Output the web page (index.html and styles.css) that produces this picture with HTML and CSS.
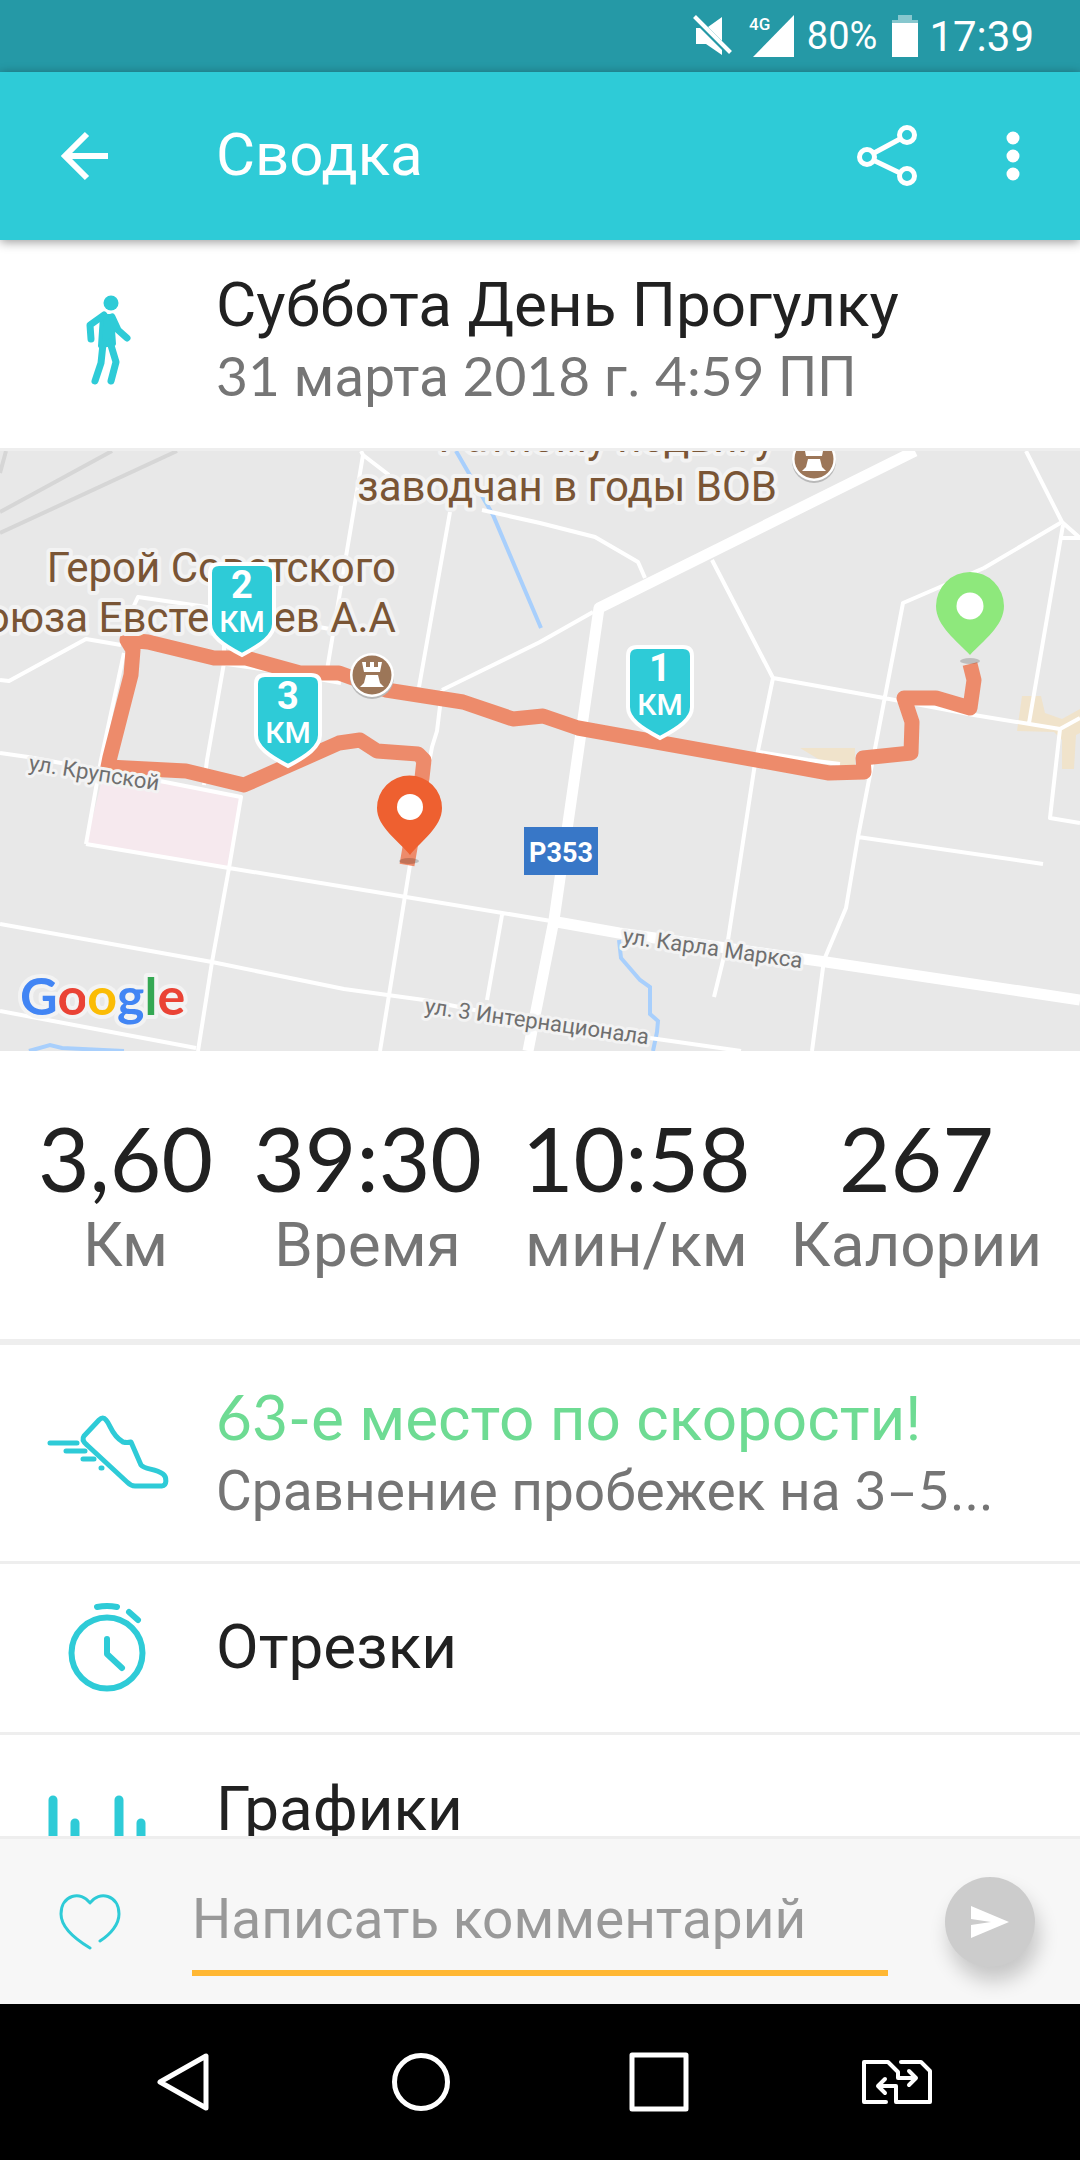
FILE: index.html
```html
<!DOCTYPE html>
<html lang="ru">
<head>
<meta charset="utf-8">
<meta name="viewport" content="width=device-width, initial-scale=1">
<title>Сводка</title>
<link rel="stylesheet" href="styles.css">
</head>
<body>
<div class="status-bar">
  <svg class="status-mute" width="40" height="42" viewBox="0 0 40 42" aria-hidden="true">
    <path d="M15 12 29 2V26ZM3 13H7L29 35V40L13 29H3Z" fill="#fff"/>
    <path d="M1.500 1.500 37.500 37.500" stroke="#fff" stroke-width="4"/>
  </svg>
  <svg class="status-signal" width="46" height="42" viewBox="0 0 46 42" aria-hidden="true">
    <text class="network" x="0" y="15">4G</text>
    <path d="M4 42H45V0Z" fill="#fff"/>
  </svg>
  <span class="battery-level">80%</span>
  <svg class="status-battery" width="26" height="42" viewBox="0 0 26 42" aria-hidden="true">
    <path d="M6 0H20V5H26V8H0V5H6Z" fill="#fff" opacity=".45"/>
    <path d="M0 8H26V42H0Z" fill="#fff"/>
  </svg>
  <span class="clock">17:39</span>
</div>

<header class="app-bar">
  <button class="icon-button back" aria-label="Назад">
    <svg width="50" height="50" viewBox="0 0 50 50" fill="none" stroke="#fff" stroke-width="6"><path d="M49 25H7M28 3 6 25 28 47"/></svg>
  </button>
  <h1 class="app-title">Сводка</h1>
  <button class="icon-button share" aria-label="Поделиться">
    <svg width="62" height="62" viewBox="0 0 62 62" fill="none" stroke="#fff" stroke-width="5"><circle cx="51" cy="10" r="7.500"/><circle cx="11" cy="32" r="7.500"/><circle cx="51" cy="51" r="7.500"/><path d="M18 28 44 14M18 35.500 44 48"/></svg>
  </button>
  <button class="icon-button more" aria-label="Ещё">
    <svg width="14" height="50" viewBox="0 0 14 50" fill="#fff"><circle cx="7" cy="7" r="6.500"/><circle cx="7" cy="25" r="6.500"/><circle cx="7" cy="43" r="6.500"/></svg>
  </button>
</header>

<main class="content">
  <section class="row activity">
    <svg class="row-icon" width="46" height="92" viewBox="0 0 46 92" fill="none" stroke="#2ecbd7" stroke-linecap="round" stroke-linejoin="round" aria-hidden="true">
      <circle cx="26" cy="9" r="7.500" fill="#2ecbd7" stroke="none"/>
      <path d="M17 22 27 22 29 50 15 52Z" fill="#2ecbd7" stroke-width="4"/>
      <path d="M19 21 5 31 6 45" stroke-width="7"/>
      <path d="M27 23 33 36 42 44" stroke-width="7"/>
      <path d="M18 50 16 69 10 87M25 48 31 68 26 87" stroke-width="7"/>
    </svg>
    <div class="row-text">
      <h2 class="row-title">Суббота День Прогулку</h2>
      <p class="row-note"><span class="num">31</span> марта <span class="num">2018</span> г. <span class="num">4:59</span> ПП</p>
    </div>
  </section>

  <svg class="map" viewBox="0 0 1080 600" role="img" aria-label="Маршрут на карте">
    <defs>
      <g id="shield">
        <path d="M11 2H57Q66 2 66 11V62C66 74 53 83 34 93 15 83 2 74 2 62V11Q2 2 11 2Z" fill="#2ecbd7" stroke="#fff" stroke-width="4"/>
      </g>
      <g id="tower">
        <circle cy="2" r="22" fill="#b9b9b9"/>
        <circle r="22" fill="#fff"/>
        <circle r="19.500" fill="#9c7658"/>
        <path d="M-10-13H-6V-8H-2V-13H2V-8H6V-13H10L8-3H-8ZM-6 0H6L8 8 12 12H-12L-8 8Z" fill="#fff"/>
      </g>
    </defs>
    <rect width="1080" height="600" fill="#e8e8e8"/>
    <path d="M0 61 112 0M0 82 177 0M0 22 6 0" fill="none" stroke="#d6d6d6" stroke-width="4"/>
    <path d="M102 329 165 331 241 346 229 417 86 393Z" fill="#f6e9ee"/>
    <path d="M1022 245H1041L1045 262 1062 268 1080 258V282L1076 284 1074 318H1062V289L1054 281 1017 280ZM800 297H855V314H828Z" fill="#f0e3cb"/>
    <path d="M456 0 493 64 541 177M619 489 621 507 640 529 650 536V563L658 570 657 581 653 600M29 600 50 594 62 597 124 600" fill="none" stroke="#a8cffc" stroke-width="4"/>
    <g fill="none" stroke="#fff" stroke-width="4" stroke-linejoin="round">
      <path d="M361 0 363 4 327 219M363 4 389 24M482 59 540 72 595 86 638 111 645 127M450 61 419 236M442 239 437 280 432 296 410 414 380 600M593 161 540 191 442 239"/>
      <path d="M0 229 9 230 86 188 121 194M124 176 138 146 207 156 330 178M124 202 101 309 86 393M220 212 269 219 341 232M224 189V212L207 309 204 334"/>
      <path d="M0 302 28 306 165 331 241 346 229 417 212 511 198 600M86 393 229 417 406 446 557 471M0 473 212 511 344 538 424 549 540 572 657 588 741 600M0 560 196 597M502 464 487 549"/>
      <path d="M712 109 773 227 884 247 974 264 1060 278 1080 267M773 227 754 319 728 489 714 546M759 301 808 309 840 313M984 117 903 152 858 386 846 457 824 509 812 600M858 386 1043 413M984 117 1062 71 1026 0M1062 71 1080 87M1063 74 1029 272M1062 87H1080M1060 278 1050 367 1080 372"/>
      <path d="M915 0 599 157 554 469 528 600M557 471 619 482 826 511 1080 549" stroke-width="11"/>
    </g>
    <g class="poi-label">
      <text x="775" y="1">Ратному подвигу</text>
      <text x="777" y="50">заводчан в годы ВОВ</text>
    </g>
    <g class="road-label">
      <text transform="translate(622 492) rotate(8)">ул. Карла Маркса</text>
      <text transform="translate(424 562) rotate(8)">ул. 3 Интернационала</text>
    </g>
    <path d="M970 213 974 229 970 257 936 247H904L912 271 911 302 863 307 864 321 829 322 578 277 543 265 513 268 463 251 386 239 339 222H300L246 207H214L148 191 127 189 133 199 131 224 110 306 108 316 186 320 244 334 339 292 360 289 377 300 418 303 424 309 422 327 407 414" fill="none" stroke="#ec8766" stroke-width="15" stroke-linejoin="round" opacity=".97"/>
    <g class="poi-label">
      <text x="396" y="131">Герой Советского</text>
      <text x="396" y="181">Союза Евстегнеев А.А</text>
    </g>
    <g class="road-label">
      <text transform="translate(28 319) rotate(9)">ул. Крупской</text>
    </g>
    <use href="#tower" x="372" y="224"/>
    <use href="#tower" x="814" y="8"/>
    <g class="km-marker" transform="translate(208 111)"><use href="#shield"/><text class="km-number" x="34" y="36">2</text><text class="km-unit" x="34" y="70">КМ</text></g>
    <g class="km-marker" transform="translate(254 222)"><use href="#shield"/><text class="km-number" x="34" y="36">3</text><text class="km-unit" x="34" y="70">КМ</text></g>
    <g class="km-marker" transform="translate(626 194)"><use href="#shield"/><text class="km-number" x="34" y="36">1</text><text class="km-unit" x="34" y="70">КМ</text></g>
    <ellipse cx="970" cy="210" rx="10" ry="3" fill="#000" opacity=".18"/>
    <path d="M970 204C957 190 936 175 936 155A34 34 0 0 1 1004 155C1004 175 983 190 970 204Z" fill="#8ee87c"/>
    <circle cx="970" cy="155" r="13.500" fill="#fff"/>
    <ellipse cx="409" cy="410" rx="10" ry="3" fill="#000" opacity=".18"/>
    <path d="M410 404C399 390 377 376 377 357A32.500 32.500 0 0 1 442 357C442 376 421 390 410 404Z" fill="#ee6030"/>
    <circle cx="410" cy="356" r="13" fill="#fff"/>
    <rect x="524" y="376" width="74" height="48" fill="#3877c7"/>
    <text class="road-number" x="561" y="411">P353</text>
    <text class="google" x="20" y="564"><tspan fill="#4285f4">G</tspan><tspan fill="#ea4335">o</tspan><tspan fill="#fbbc05">o</tspan><tspan fill="#4285f4">g</tspan><tspan fill="#34a853">l</tspan><tspan fill="#ea4335">e</tspan></text>
  </svg>

  <dl class="stats">
    <div class="stat"><dd class="stat-value">3,60</dd><dt class="stat-label">Км</dt></div>
    <div class="stat"><dd class="stat-value">39:30</dd><dt class="stat-label">Время</dt></div>
    <div class="stat"><dd class="stat-value">10:58</dd><dt class="stat-label">мин/км</dt></div>
    <div class="stat"><dd class="stat-value">267</dd><dt class="stat-label">Калории</dt></div>
  </dl>

  <a class="row rank" href="#rank">
    <svg class="row-icon" width="122" height="74" viewBox="0 0 122 74" fill="none" stroke="#2ecbd7" stroke-width="5" stroke-linecap="round" stroke-linejoin="round" aria-hidden="true">
      <path d="M37 21 52 5Q56 1 59 5C64 10 64 20 76 27Q80 28 84 27L94 50C98 55 108 53 116 59 120 62 120 71 115 71H88Q84 71 80 67L40 30Q34 25 37 21Z"/>
      <path d="M3 28H30M19 36H38M36 44H47M54 53H55"/>
    </svg>
    <div class="row-text">
      <h2 class="row-title good"><span class="num">63-</span>е место по скорости!</h2>
      <p class="row-note">Сравнение пробежек на <span class="num">3–5</span>...</p>
    </div>
  </a>

  <a class="row splits" href="#splits">
    <svg class="row-icon" width="80" height="92" viewBox="0 0 80 92" fill="none" stroke="#2ecbd7" stroke-width="6" stroke-linecap="round" stroke-linejoin="round" aria-hidden="true">
      <circle cx="39" cy="52" r="35.500"/>
      <path d="M39 38V53L54 67M29 6Q39 4 49 6M61 11 70 19"/>
    </svg>
    <h2 class="row-title">Отрезки</h2>
  </a>

  <a class="row charts" href="#charts">
    <svg class="row-icon" width="120" height="70" viewBox="0 0 120 70" fill="none" stroke="#2ecbd7" stroke-width="9" stroke-linecap="round" aria-hidden="true">
      <path d="M5 5V65M27 28V65M49 50V65M71 5V65M93 28V65M115 50V65"/>
    </svg>
    <h2 class="row-title">Графики</h2>
  </a>
</main>

<form class="comment-bar">
  <button class="icon-button like" type="button" aria-label="Нравится">
    <svg width="62" height="56" viewBox="0 0 62 56" fill="none" stroke="#2ecbd7" stroke-width="3" stroke-linecap="round" stroke-linejoin="round"><path d="M31 54C16 45 2 33 2 20 2 1 22-4 31 9 40-4 60 1 60 20 60 30 52 40 41 47"/></svg>
  </button>
  <input class="comment-input" type="text" placeholder="Написать комментарий" aria-label="Написать комментарий">
  <button class="send-button" type="submit" aria-label="Отправить">
    <svg width="38" height="34" viewBox="0 0 38 34" fill="#fff"><path d="M0 1 38 17 0 33V20L20 17 0 14Z"/></svg>
  </button>
</form>

<nav class="nav-bar">
  <button class="icon-button" aria-label="Назад"><svg width="60" height="62" viewBox="0 0 60 62" fill="none" stroke="#fff" stroke-width="5" stroke-linejoin="round"><path d="M53 5V57L7 31Z"/></svg></button>
  <button class="icon-button" aria-label="Домой"><svg width="60" height="60" viewBox="0 0 60 60" fill="none" stroke="#fff" stroke-width="5"><circle cx="30" cy="30" r="26.500"/></svg></button>
  <button class="icon-button" aria-label="Недавние"><svg width="60" height="60" viewBox="0 0 60 60" fill="none" stroke="#fff" stroke-width="5"><path d="M3 3H57V57H3Z" stroke-linejoin="round"/></svg></button>
  <button class="icon-button" aria-label="Сменить SIM-карту"><svg width="70" height="46" viewBox="0 0 70 46" fill="none" stroke="#fff" stroke-width="4" stroke-linecap="round" stroke-linejoin="round"><path d="M24 43H2V3H26L36 13V19H54M47 12 54 19 47 26M39 3H59L68 12V43H34V27H16M23 20 16 27 23 34"/></svg></button>
</nav>
</body>
</html>
```

FILE: styles.css
```css
* { box-sizing: border-box; margin: 0; padding: 0; }

body {
  display: flex;
  flex-direction: column;
  height: 100vh;
  background: #fff;
  color: #212121;
  font-family: Roboto, "Liberation Sans", sans-serif;
}

svg { display: block; flex: none; }
button { border: 0; background: none; cursor: pointer; }
a { color: inherit; text-decoration: none; }
h1, h2 { font-weight: 400; }

.icon-button { display: flex; align-items: center; justify-content: center; }
.num { font-family: Lato, Roboto, sans-serif; }

/* Status bar */
.status-bar {
  display: flex;
  flex: none;
  align-items: center;
  justify-content: flex-end;
  height: 72px;
  padding-right: 46px;
  background: #2599a6;
  color: #fff;
}
.status-signal { margin-left: 16px; }
.network { fill: #fff; font-size: 17px; font-weight: 500; }
.battery-level { margin-left: 12px; font-size: 38px; }
.status-battery { margin: 0 11px 0 15px; }
.clock { font-size: 42px; }

/* App bar */
.app-bar {
  position: relative;
  display: flex;
  flex: none;
  align-items: center;
  height: 168px;
  padding-right: 60px;
  background: #2ecbd7;
  box-shadow: 0 2px 10px rgba(0, 0, 0, .4);
  color: #fff;
}
.back { width: 168px; height: 168px; }
.app-title { flex: 1; padding-left: 48px; font-size: 60px; line-height: 72px; padding-bottom: 2px; }
.more { margin-left: 88px; }

/* Scrolling content */
.content { flex: 1; min-height: 0; overflow-y: auto; scrollbar-width: none; }

.row {
  display: grid;
  grid-template-columns: 216px 1fr;
  align-items: center;
  border-bottom: 3px solid #eee;
}
.row-icon { justify-self: center; }
.row-title { font-size: 62px; line-height: 72px; }
.row-note { color: #757575; font-size: 55px; line-height: 68px; }
.good { color: #6edb93; }

.activity { height: 211px; padding-bottom: 8px; }
.rank { height: 219px; padding-bottom: 2px; }
.splits { height: 171px; padding-bottom: 2px; }
.charts { align-items: start; height: 171px; padding-top: 38px; }
.charts .row-icon { margin-top: 22px; }

/* Map */
.map { width: 100%; height: auto; }
.poi-label { fill: #7a5535; font-size: 42px; text-anchor: end; stroke: #f3f3f3; stroke-width: 8px; stroke-linejoin: round; paint-order: stroke; }
.road-label { fill: #6f6f6f; font-size: 22px; stroke: #f3f3f3; stroke-width: 6px; stroke-linejoin: round; paint-order: stroke; }
.road-number { fill: #fff; font-size: 27px; font-weight: 700; text-anchor: middle; }
.km-marker { fill: #fff; text-anchor: middle; }
.km-number { font-size: 38px; font-weight: 700; }
.km-unit { font-size: 30px; font-weight: 500; }
.google { font-family: Lato, sans-serif; font-size: 52px; font-weight: 700; stroke: #f3f3f3; stroke-width: 8px; stroke-linejoin: round; paint-order: stroke; }

/* Totals */
.stats {
  display: flex;
  justify-content: space-between;
  height: 294px;
  padding: 56px 38px 0;
  border-bottom: 6px solid #eee;
}
.stat { text-align: center; }
.stat-value { font-family: Lato, Roboto, sans-serif; font-size: 89px; line-height: 102px; }
.stat-label { color: #757575; font-size: 62px; line-height: 72px; }

/* Comment bar */
.comment-bar {
  display: flex;
  flex: none;
  align-items: center;
  height: 168px;
  padding-right: 45px;
  border-top: 3px solid #eee;
  background: #f7f7f7;
}
.like { width: 180px; height: 120px; }
.comment-input {
  flex: 1;
  min-width: 0;
  height: 108px;
  margin: 0 57px 0 12px;
  border: 0;
  border-bottom: 6px solid #ffb733;
  outline: 0;
  background: none;
  color: #212121;
  font: 55px Roboto, "Liberation Sans", sans-serif;
}
.comment-input::placeholder { color: #999; opacity: 1; }
.send-button {
  display: flex;
  align-items: center;
  justify-content: center;
  width: 90px;
  height: 90px;
  border-radius: 50%;
  background: #ccc;
  box-shadow: 4px 14px 20px rgba(0, 0, 0, .2);
}

/* System navigation */
.nav-bar {
  display: grid;
  flex: none;
  grid-template-columns: repeat(4, 1fr);
  height: 156px;
  padding: 0 64px;
  background: #000;
}
```
